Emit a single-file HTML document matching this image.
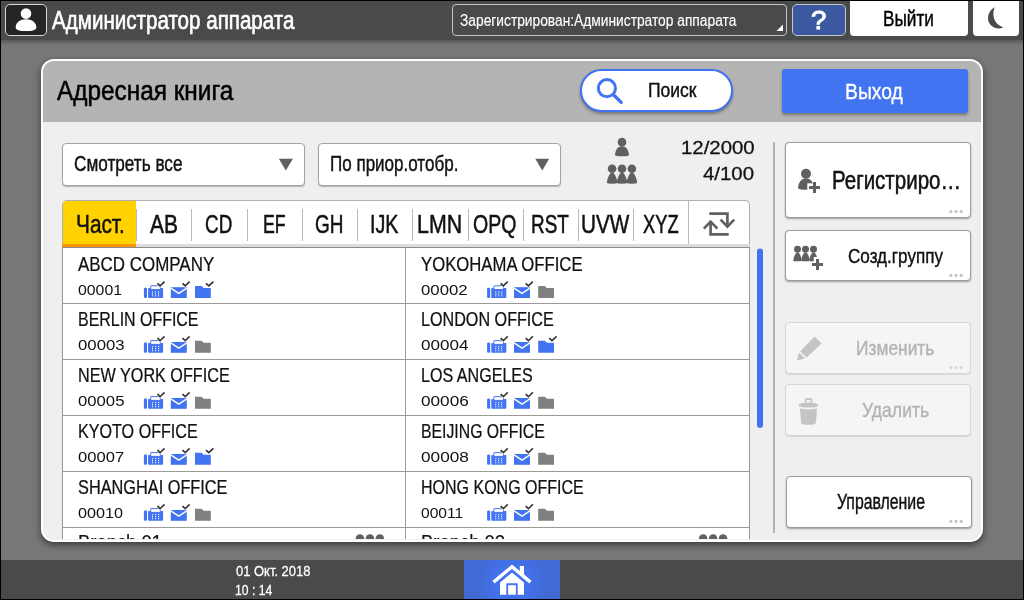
<!DOCTYPE html>
<html lang="ru"><head><meta charset="utf-8"><title>Адресная книга</title>
<style>
html,body{margin:0;padding:0;background:#000}
#root{position:relative;width:1024px;height:600px;overflow:hidden;background:#777;font-family:'Liberation Sans',sans-serif}
.t{position:absolute;white-space:pre;line-height:1;transform-origin:0 0;display:block;-webkit-text-stroke:0.028em}
.ov{position:absolute;left:0;top:0;pointer-events:none}
#top{position:absolute;left:0;top:0;width:1024px;height:40px;background:#494a4c}
#topsh{position:absolute;left:0;top:40px;width:1024px;height:5px;background:linear-gradient(#585858,#777)}
#ubox{position:absolute;left:5px;top:4px;width:40px;height:30px;border:1px solid #d8d8d8;border-radius:5px;background:#252525}
#reg{position:absolute;left:452px;top:4px;width:333px;height:30px;border:1px solid #c4c4c4;border-radius:4px;background:#494a4c}
#help{position:absolute;left:792px;top:4px;width:52px;height:30px;border:1px solid #c8c8c8;border-radius:5px;background:#3c58a0}
#logout{position:absolute;left:850px;top:1px;width:118px;height:35px;background:#fff;border-radius:0 0 4px 4px}
#moon{position:absolute;left:973px;top:1px;width:46px;height:35px;background:#fff;border-radius:0 0 4px 4px}
#dlg{position:absolute;left:41px;top:59px;width:938px;height:479px;border:2px solid #fff;border-radius:13px;background:#efefef;box-shadow:0 3px 7px 0 rgba(0,0,0,.5);overflow:hidden}
#hdr{position:absolute;left:0;top:0;width:938px;height:60.5px;background:#b4b4b4}
#search{position:absolute;left:580px;top:69px;width:149px;height:39px;border:2px solid #4273f0;border-radius:22px;background:#fff;box-shadow:0 2px 3px rgba(0,0,0,.35)}
#exit{position:absolute;left:782px;top:69px;width:186px;height:43.5px;border-radius:3px;background:#4273f0;box-shadow:0 2px 3px rgba(0,0,0,.35)}
.dd{position:absolute;top:142.5px;height:41.5px;border:1px solid #a4a4a4;border-radius:4px;background:#fff;box-shadow:0 1px 1px rgba(0,0,0,.25)}
#tabs{position:absolute;left:62px;top:200px;width:685.5px;height:43.5px;border:1px solid #b0b0b0;border-bottom:none;border-radius:5px 5px 0 0;background:#fff;overflow:hidden}
#tabs .sel{position:absolute;left:0;top:0;width:73px;height:43.5px;background:#ffd200}
#tabline{position:absolute;left:62px;top:244px;width:687.5px;height:3.3px;background:#dcdcdc}
#tabline i{position:absolute;left:0;top:0;width:74px;height:3.3px;background:#ff9600}
.sep{position:absolute;top:7.5px;width:1px;height:32.5px;background:#b8b8b8}
#list{position:absolute;left:62px;top:247px;width:685.5px;height:300px;border:1px solid #999;border-top-color:#8c8c8c;background:#fff}
.row{position:absolute;left:0;width:687px;height:55px;border-bottom:1px solid #9a9a9a}
#cdiv{position:absolute;left:342px;top:0;width:1px;height:300px;background:#9a9a9a}
#vline{position:absolute;left:773px;top:142px;width:1.5px;height:391px;background:#b4b4b4}
.btn{position:absolute;left:785px;width:184px;border:1px solid #9c9c9c;border-radius:4px;background:#fff;box-shadow:0 1px 2px rgba(0,0,0,.35)}
.btn.dis{background:#f5f5f5;border-color:#d6d6d6;box-shadow:0 1px 1px rgba(0,0,0,.1)}
#bot{position:absolute;left:0;top:560px;width:1024px;height:40px;background:#494a4c}
#frame{position:absolute;left:0;top:0;width:1022px;height:598px;border:1px solid #000;border-width:1px 1px 1px 1px}
</style></head><body>
<div id="root">
<div id="top"></div><div id="topsh"></div>
<div id="ubox"></div><div id="reg"></div><div id="help"></div><div id="logout"></div><div id="moon"></div>
<div id="dlg"><div id="hdr"></div></div>
<div id="search"></div><div id="exit"></div>
<div class="dd" style="left:62px;width:240.5px"></div><div class="dd" style="left:318px;width:240.5px"></div>
<div id="tabs"><div class="sel"></div><div class="sep" style="left:73px"></div><div class="sep" style="left:128.4px"></div><div class="sep" style="left:183.7px"></div><div class="sep" style="left:238.9px"></div><div class="sep" style="left:294.1px"></div><div class="sep" style="left:349.2px"></div><div class="sep" style="left:404.5px"></div><div class="sep" style="left:459.7px"></div><div class="sep" style="left:514.9px"></div><div class="sep" style="left:570.0px"></div><div class="sep" style="left:625.2px;top:0;height:44px"></div></div>
<div id="tabline"><i></i></div>
<div id="listclip" style="position:absolute;left:43px;top:61px;width:938px;height:478px;border-radius:11px;overflow:hidden"><div id="list" style="left:19px;top:186.4px"><div class="row" style="top:0px"></div><div class="row" style="top:56px"></div><div class="row" style="top:112px"></div><div class="row" style="top:168px"></div><div class="row" style="top:224px"></div><div class="row" style="top:280px"></div><div id="cdiv"></div></div></div>
<div id="vline"></div>
<div class="btn" style="top:142px;height:73.5px"></div>
<div class="btn" style="top:230px;height:49px"></div>
<div class="btn dis" style="top:322px;height:49.5px"></div>
<div class="btn dis" style="top:384px;height:49.5px"></div>
<div class="btn" style="top:476px;height:49.5px;left:786px;width:183.5px"></div>
<div id="bot"></div>
<svg class="ov" width="1024" height="600" viewBox="0 0 1024 600">
<defs><clipPath id="dclip"><rect x="43" y="61" width="938" height="478" rx="10"/></clipPath>
<radialGradient id="hg" gradientUnits="userSpaceOnUse" cx="512" cy="582" r="34"><stop offset="0" stop-color="#4375f3"/><stop offset="0.45" stop-color="#4272ed"/><stop offset="1" stop-color="#416ad5"/></radialGradient></defs>
<!-- user icon -->
<circle cx="26" cy="13.6" r="5.3" fill="#fff"/>
<path d="M15.7 27.4 C15.7 22.6 20 19.3 26 19.3 C32 19.3 36.3 22.6 36.3 27.4 C36.3 30.2 32 31 26 31 C20 31 15.7 30.2 15.7 27.4 Z" fill="#fff"/>
<!-- dropdown corner -->
<path d="M783 24.5 V31 H776.5 Z" fill="#fff"/>
<!-- moon -->
<path d="M994.8 7.2 C991.8 13.5 993.2 24.4 1003.6 27.2 C995.5 31.4 987 24.6 988.1 16.8 C988.7 12.2 991.6 8.8 994.8 7.2 Z" fill="#48494b"/>
<!-- search -->
<circle cx="606.9" cy="88.2" r="8.6" fill="none" stroke="#4273f0" stroke-width="3"/>
<path d="M613.4 94.8 L621.2 102.4" stroke="#4273f0" stroke-width="3.4" stroke-linecap="round"/>
<!-- triangles -->
<path d="M278.8 158.8 H292.9 L285.85 170.4 Z" fill="#606060"/>
<path d="M535.3 158.8 H549.2 L542.25 170.4 Z" fill="#606060"/>
<!-- counts icons -->
<g transform="translate(622,142.1) scale(1)" fill="#606060"><circle cx="0" cy="0" r="4.35"/><path d="M-7 12.8 C-6.6 9 -5 6 -3 5 Q0 3.4 3 5 C5 6 6.6 9 7 12.8 Q7 14.2 0 14.2 Q-7 14.2 -7 12.8 Z"/></g>
<g transform="translate(612.1,168.7) scale(1)" fill="#606060"><circle cx="0" cy="0" r="4.3"/><path d="M-5.2 13.8 C-4.8 10 -3 6 -1.6 4.6 Q0 3.4 1.6 4.6 C3 6 4.8 10 5.2 13.8 Q5.2 15 0 15 Q-5.2 15 -5.2 13.8 Z"/></g><g transform="translate(631.9,168.7) scale(1)" fill="#606060"><circle cx="0" cy="0" r="4.3"/><path d="M-5.2 13.8 C-4.8 10 -3 6 -1.6 4.6 Q0 3.4 1.6 4.6 C3 6 4.8 10 5.2 13.8 Q5.2 15 0 15 Q-5.2 15 -5.2 13.8 Z"/></g><g transform="translate(622.0,168.7) scale(1)" fill="#606060"><circle cx="0" cy="0" r="4.3"/><path d="M-5.2 13.8 C-4.8 10 -3 6 -1.6 4.6 Q0 3.4 1.6 4.6 C3 6 4.8 10 5.2 13.8 Q5.2 15 0 15 Q-5.2 15 -5.2 13.8 Z"/></g>
<!-- swap -->
<g fill="none" stroke="#606060" stroke-width="2.7">
<path d="M709.3 213.7 H727.4 V226"/><path d="M720.6 219.6 L727.4 226.6 L734.2 219.6"/>
<path d="M728.7 234.4 H710.6 V222"/><path d="M703.8 228.6 L710.6 221.6 L717.4 228.6"/>
</g>
<!-- list icons -->
<g clip-path="url(#dclip)"><g transform="translate(143.9,281.2)"><rect x="0" y="6.5" width="3.1" height="10.3" rx="1.3" fill="#4273f0"/><rect x="4.2" y="6.9" width="15" height="9.9" rx="0.8" fill="#4273f0"/><rect x="6.8" y="4.6" width="9.6" height="3.8" rx="0.4" fill="#fff" stroke="#4273f0" stroke-width="1"/><rect x="8.1" y="10.1" width="1.1" height="1.1" fill="#fff"/><rect x="8.1" y="12.1" width="1.1" height="1.1" fill="#fff"/><rect x="8.1" y="14.1" width="1.1" height="1.1" fill="#fff"/><rect x="11.1" y="10.1" width="1.1" height="1.1" fill="#fff"/><rect x="11.1" y="12.1" width="1.1" height="1.1" fill="#fff"/><rect x="11.1" y="14.1" width="1.1" height="1.1" fill="#fff"/><rect x="14.1" y="10.1" width="1.1" height="1.1" fill="#fff"/><rect x="14.1" y="12.1" width="1.1" height="1.1" fill="#fff"/><rect x="14.1" y="14.1" width="1.1" height="1.1" fill="#fff"/><path d="M13.5 2.1 L16.2 4.7 L20.6 0.4" fill="none" stroke="#fff" stroke-width="2.6"/><path d="M13.5 2.1 L16.2 4.7 L20.6 0.4" fill="none" stroke="#333" stroke-width="1.6"/></g><g transform="translate(170.8,281.2)"><rect x="0" y="6" width="16" height="10.8" fill="#4273f0"/><path d="M0 6.9 L8 12.2 L16 6.9" fill="none" stroke="#fff" stroke-width="1.4"/><path d="M11.7 2.1 L14.4 4.7 L18.8 0.4" fill="none" stroke="#fff" stroke-width="2.6"/><path d="M11.7 2.1 L14.4 4.7 L18.8 0.4" fill="none" stroke="#333" stroke-width="1.6"/></g><g transform="translate(195.0,281.2)"><path d="M0 4.8 L6.6 4.8 L8.6 6.8 L15.8 6.8 L15.8 16.8 L0 16.8 Z" fill="#4273f0"/><path d="M11 2.1 L13.8 4.7 L18.4 0.4" fill="none" stroke="#fff" stroke-width="2.6"/><path d="M11 2.1 L13.8 4.7 L18.4 0.4" fill="none" stroke="#333" stroke-width="1.6"/></g><g transform="translate(487.1,281.2)"><rect x="0" y="6.5" width="3.1" height="10.3" rx="1.3" fill="#4273f0"/><rect x="4.2" y="6.9" width="15" height="9.9" rx="0.8" fill="#4273f0"/><rect x="6.8" y="4.6" width="9.6" height="3.8" rx="0.4" fill="#fff" stroke="#4273f0" stroke-width="1"/><rect x="8.1" y="10.1" width="1.1" height="1.1" fill="#fff"/><rect x="8.1" y="12.1" width="1.1" height="1.1" fill="#fff"/><rect x="8.1" y="14.1" width="1.1" height="1.1" fill="#fff"/><rect x="11.1" y="10.1" width="1.1" height="1.1" fill="#fff"/><rect x="11.1" y="12.1" width="1.1" height="1.1" fill="#fff"/><rect x="11.1" y="14.1" width="1.1" height="1.1" fill="#fff"/><rect x="14.1" y="10.1" width="1.1" height="1.1" fill="#fff"/><rect x="14.1" y="12.1" width="1.1" height="1.1" fill="#fff"/><rect x="14.1" y="14.1" width="1.1" height="1.1" fill="#fff"/><path d="M13.5 2.1 L16.2 4.7 L20.6 0.4" fill="none" stroke="#fff" stroke-width="2.6"/><path d="M13.5 2.1 L16.2 4.7 L20.6 0.4" fill="none" stroke="#333" stroke-width="1.6"/></g><g transform="translate(514.0,281.2)"><rect x="0" y="6" width="16" height="10.8" fill="#4273f0"/><path d="M0 6.9 L8 12.2 L16 6.9" fill="none" stroke="#fff" stroke-width="1.4"/><path d="M11.7 2.1 L14.4 4.7 L18.8 0.4" fill="none" stroke="#fff" stroke-width="2.6"/><path d="M11.7 2.1 L14.4 4.7 L18.8 0.4" fill="none" stroke="#333" stroke-width="1.6"/></g><g transform="translate(538.2,281.2)"><path d="M0 4.8 L6.6 4.8 L8.6 6.8 L15.8 6.8 L15.8 16.8 L0 16.8 Z" fill="#808080"/></g><g transform="translate(143.9,336.0)"><rect x="0" y="6.5" width="3.1" height="10.3" rx="1.3" fill="#4273f0"/><rect x="4.2" y="6.9" width="15" height="9.9" rx="0.8" fill="#4273f0"/><rect x="6.8" y="4.6" width="9.6" height="3.8" rx="0.4" fill="#fff" stroke="#4273f0" stroke-width="1"/><rect x="8.1" y="10.1" width="1.1" height="1.1" fill="#fff"/><rect x="8.1" y="12.1" width="1.1" height="1.1" fill="#fff"/><rect x="8.1" y="14.1" width="1.1" height="1.1" fill="#fff"/><rect x="11.1" y="10.1" width="1.1" height="1.1" fill="#fff"/><rect x="11.1" y="12.1" width="1.1" height="1.1" fill="#fff"/><rect x="11.1" y="14.1" width="1.1" height="1.1" fill="#fff"/><rect x="14.1" y="10.1" width="1.1" height="1.1" fill="#fff"/><rect x="14.1" y="12.1" width="1.1" height="1.1" fill="#fff"/><rect x="14.1" y="14.1" width="1.1" height="1.1" fill="#fff"/><path d="M13.5 2.1 L16.2 4.7 L20.6 0.4" fill="none" stroke="#fff" stroke-width="2.6"/><path d="M13.5 2.1 L16.2 4.7 L20.6 0.4" fill="none" stroke="#333" stroke-width="1.6"/></g><g transform="translate(170.8,336.0)"><rect x="0" y="6" width="16" height="10.8" fill="#4273f0"/><path d="M0 6.9 L8 12.2 L16 6.9" fill="none" stroke="#fff" stroke-width="1.4"/><path d="M11.7 2.1 L14.4 4.7 L18.8 0.4" fill="none" stroke="#fff" stroke-width="2.6"/><path d="M11.7 2.1 L14.4 4.7 L18.8 0.4" fill="none" stroke="#333" stroke-width="1.6"/></g><g transform="translate(195.0,336.0)"><path d="M0 4.8 L6.6 4.8 L8.6 6.8 L15.8 6.8 L15.8 16.8 L0 16.8 Z" fill="#808080"/></g><g transform="translate(487.1,336.0)"><rect x="0" y="6.5" width="3.1" height="10.3" rx="1.3" fill="#4273f0"/><rect x="4.2" y="6.9" width="15" height="9.9" rx="0.8" fill="#4273f0"/><rect x="6.8" y="4.6" width="9.6" height="3.8" rx="0.4" fill="#fff" stroke="#4273f0" stroke-width="1"/><rect x="8.1" y="10.1" width="1.1" height="1.1" fill="#fff"/><rect x="8.1" y="12.1" width="1.1" height="1.1" fill="#fff"/><rect x="8.1" y="14.1" width="1.1" height="1.1" fill="#fff"/><rect x="11.1" y="10.1" width="1.1" height="1.1" fill="#fff"/><rect x="11.1" y="12.1" width="1.1" height="1.1" fill="#fff"/><rect x="11.1" y="14.1" width="1.1" height="1.1" fill="#fff"/><rect x="14.1" y="10.1" width="1.1" height="1.1" fill="#fff"/><rect x="14.1" y="12.1" width="1.1" height="1.1" fill="#fff"/><rect x="14.1" y="14.1" width="1.1" height="1.1" fill="#fff"/><path d="M13.5 2.1 L16.2 4.7 L20.6 0.4" fill="none" stroke="#fff" stroke-width="2.6"/><path d="M13.5 2.1 L16.2 4.7 L20.6 0.4" fill="none" stroke="#333" stroke-width="1.6"/></g><g transform="translate(514.0,336.0)"><rect x="0" y="6" width="16" height="10.8" fill="#4273f0"/><path d="M0 6.9 L8 12.2 L16 6.9" fill="none" stroke="#fff" stroke-width="1.4"/><path d="M11.7 2.1 L14.4 4.7 L18.8 0.4" fill="none" stroke="#fff" stroke-width="2.6"/><path d="M11.7 2.1 L14.4 4.7 L18.8 0.4" fill="none" stroke="#333" stroke-width="1.6"/></g><g transform="translate(538.2,336.0)"><path d="M0 4.8 L6.6 4.8 L8.6 6.8 L15.8 6.8 L15.8 16.8 L0 16.8 Z" fill="#4273f0"/><path d="M11 2.1 L13.8 4.7 L18.4 0.4" fill="none" stroke="#fff" stroke-width="2.6"/><path d="M11 2.1 L13.8 4.7 L18.4 0.4" fill="none" stroke="#333" stroke-width="1.6"/></g><g transform="translate(143.9,392.0)"><rect x="0" y="6.5" width="3.1" height="10.3" rx="1.3" fill="#4273f0"/><rect x="4.2" y="6.9" width="15" height="9.9" rx="0.8" fill="#4273f0"/><rect x="6.8" y="4.6" width="9.6" height="3.8" rx="0.4" fill="#fff" stroke="#4273f0" stroke-width="1"/><rect x="8.1" y="10.1" width="1.1" height="1.1" fill="#fff"/><rect x="8.1" y="12.1" width="1.1" height="1.1" fill="#fff"/><rect x="8.1" y="14.1" width="1.1" height="1.1" fill="#fff"/><rect x="11.1" y="10.1" width="1.1" height="1.1" fill="#fff"/><rect x="11.1" y="12.1" width="1.1" height="1.1" fill="#fff"/><rect x="11.1" y="14.1" width="1.1" height="1.1" fill="#fff"/><rect x="14.1" y="10.1" width="1.1" height="1.1" fill="#fff"/><rect x="14.1" y="12.1" width="1.1" height="1.1" fill="#fff"/><rect x="14.1" y="14.1" width="1.1" height="1.1" fill="#fff"/><path d="M13.5 2.1 L16.2 4.7 L20.6 0.4" fill="none" stroke="#fff" stroke-width="2.6"/><path d="M13.5 2.1 L16.2 4.7 L20.6 0.4" fill="none" stroke="#333" stroke-width="1.6"/></g><g transform="translate(170.8,392.0)"><rect x="0" y="6" width="16" height="10.8" fill="#4273f0"/><path d="M0 6.9 L8 12.2 L16 6.9" fill="none" stroke="#fff" stroke-width="1.4"/><path d="M11.7 2.1 L14.4 4.7 L18.8 0.4" fill="none" stroke="#fff" stroke-width="2.6"/><path d="M11.7 2.1 L14.4 4.7 L18.8 0.4" fill="none" stroke="#333" stroke-width="1.6"/></g><g transform="translate(195.0,392.0)"><path d="M0 4.8 L6.6 4.8 L8.6 6.8 L15.8 6.8 L15.8 16.8 L0 16.8 Z" fill="#808080"/></g><g transform="translate(487.1,392.0)"><rect x="0" y="6.5" width="3.1" height="10.3" rx="1.3" fill="#4273f0"/><rect x="4.2" y="6.9" width="15" height="9.9" rx="0.8" fill="#4273f0"/><rect x="6.8" y="4.6" width="9.6" height="3.8" rx="0.4" fill="#fff" stroke="#4273f0" stroke-width="1"/><rect x="8.1" y="10.1" width="1.1" height="1.1" fill="#fff"/><rect x="8.1" y="12.1" width="1.1" height="1.1" fill="#fff"/><rect x="8.1" y="14.1" width="1.1" height="1.1" fill="#fff"/><rect x="11.1" y="10.1" width="1.1" height="1.1" fill="#fff"/><rect x="11.1" y="12.1" width="1.1" height="1.1" fill="#fff"/><rect x="11.1" y="14.1" width="1.1" height="1.1" fill="#fff"/><rect x="14.1" y="10.1" width="1.1" height="1.1" fill="#fff"/><rect x="14.1" y="12.1" width="1.1" height="1.1" fill="#fff"/><rect x="14.1" y="14.1" width="1.1" height="1.1" fill="#fff"/><path d="M13.5 2.1 L16.2 4.7 L20.6 0.4" fill="none" stroke="#fff" stroke-width="2.6"/><path d="M13.5 2.1 L16.2 4.7 L20.6 0.4" fill="none" stroke="#333" stroke-width="1.6"/></g><g transform="translate(514.0,392.0)"><rect x="0" y="6" width="16" height="10.8" fill="#4273f0"/><path d="M0 6.9 L8 12.2 L16 6.9" fill="none" stroke="#fff" stroke-width="1.4"/><path d="M11.7 2.1 L14.4 4.7 L18.8 0.4" fill="none" stroke="#fff" stroke-width="2.6"/><path d="M11.7 2.1 L14.4 4.7 L18.8 0.4" fill="none" stroke="#333" stroke-width="1.6"/></g><g transform="translate(538.2,392.0)"><path d="M0 4.8 L6.6 4.8 L8.6 6.8 L15.8 6.8 L15.8 16.8 L0 16.8 Z" fill="#808080"/></g><g transform="translate(143.9,448.0)"><rect x="0" y="6.5" width="3.1" height="10.3" rx="1.3" fill="#4273f0"/><rect x="4.2" y="6.9" width="15" height="9.9" rx="0.8" fill="#4273f0"/><rect x="6.8" y="4.6" width="9.6" height="3.8" rx="0.4" fill="#fff" stroke="#4273f0" stroke-width="1"/><rect x="8.1" y="10.1" width="1.1" height="1.1" fill="#fff"/><rect x="8.1" y="12.1" width="1.1" height="1.1" fill="#fff"/><rect x="8.1" y="14.1" width="1.1" height="1.1" fill="#fff"/><rect x="11.1" y="10.1" width="1.1" height="1.1" fill="#fff"/><rect x="11.1" y="12.1" width="1.1" height="1.1" fill="#fff"/><rect x="11.1" y="14.1" width="1.1" height="1.1" fill="#fff"/><rect x="14.1" y="10.1" width="1.1" height="1.1" fill="#fff"/><rect x="14.1" y="12.1" width="1.1" height="1.1" fill="#fff"/><rect x="14.1" y="14.1" width="1.1" height="1.1" fill="#fff"/><path d="M13.5 2.1 L16.2 4.7 L20.6 0.4" fill="none" stroke="#fff" stroke-width="2.6"/><path d="M13.5 2.1 L16.2 4.7 L20.6 0.4" fill="none" stroke="#333" stroke-width="1.6"/></g><g transform="translate(170.8,448.0)"><rect x="0" y="6" width="16" height="10.8" fill="#4273f0"/><path d="M0 6.9 L8 12.2 L16 6.9" fill="none" stroke="#fff" stroke-width="1.4"/><path d="M11.7 2.1 L14.4 4.7 L18.8 0.4" fill="none" stroke="#fff" stroke-width="2.6"/><path d="M11.7 2.1 L14.4 4.7 L18.8 0.4" fill="none" stroke="#333" stroke-width="1.6"/></g><g transform="translate(195.0,448.0)"><path d="M0 4.8 L6.6 4.8 L8.6 6.8 L15.8 6.8 L15.8 16.8 L0 16.8 Z" fill="#4273f0"/><path d="M11 2.1 L13.8 4.7 L18.4 0.4" fill="none" stroke="#fff" stroke-width="2.6"/><path d="M11 2.1 L13.8 4.7 L18.4 0.4" fill="none" stroke="#333" stroke-width="1.6"/></g><g transform="translate(487.1,448.0)"><rect x="0" y="6.5" width="3.1" height="10.3" rx="1.3" fill="#4273f0"/><rect x="4.2" y="6.9" width="15" height="9.9" rx="0.8" fill="#4273f0"/><rect x="6.8" y="4.6" width="9.6" height="3.8" rx="0.4" fill="#fff" stroke="#4273f0" stroke-width="1"/><rect x="8.1" y="10.1" width="1.1" height="1.1" fill="#fff"/><rect x="8.1" y="12.1" width="1.1" height="1.1" fill="#fff"/><rect x="8.1" y="14.1" width="1.1" height="1.1" fill="#fff"/><rect x="11.1" y="10.1" width="1.1" height="1.1" fill="#fff"/><rect x="11.1" y="12.1" width="1.1" height="1.1" fill="#fff"/><rect x="11.1" y="14.1" width="1.1" height="1.1" fill="#fff"/><rect x="14.1" y="10.1" width="1.1" height="1.1" fill="#fff"/><rect x="14.1" y="12.1" width="1.1" height="1.1" fill="#fff"/><rect x="14.1" y="14.1" width="1.1" height="1.1" fill="#fff"/><path d="M13.5 2.1 L16.2 4.7 L20.6 0.4" fill="none" stroke="#fff" stroke-width="2.6"/><path d="M13.5 2.1 L16.2 4.7 L20.6 0.4" fill="none" stroke="#333" stroke-width="1.6"/></g><g transform="translate(514.0,448.0)"><rect x="0" y="6" width="16" height="10.8" fill="#4273f0"/><path d="M0 6.9 L8 12.2 L16 6.9" fill="none" stroke="#fff" stroke-width="1.4"/><path d="M11.7 2.1 L14.4 4.7 L18.8 0.4" fill="none" stroke="#fff" stroke-width="2.6"/><path d="M11.7 2.1 L14.4 4.7 L18.8 0.4" fill="none" stroke="#333" stroke-width="1.6"/></g><g transform="translate(538.2,448.0)"><path d="M0 4.8 L6.6 4.8 L8.6 6.8 L15.8 6.8 L15.8 16.8 L0 16.8 Z" fill="#808080"/></g><g transform="translate(143.9,504.0)"><rect x="0" y="6.5" width="3.1" height="10.3" rx="1.3" fill="#4273f0"/><rect x="4.2" y="6.9" width="15" height="9.9" rx="0.8" fill="#4273f0"/><rect x="6.8" y="4.6" width="9.6" height="3.8" rx="0.4" fill="#fff" stroke="#4273f0" stroke-width="1"/><rect x="8.1" y="10.1" width="1.1" height="1.1" fill="#fff"/><rect x="8.1" y="12.1" width="1.1" height="1.1" fill="#fff"/><rect x="8.1" y="14.1" width="1.1" height="1.1" fill="#fff"/><rect x="11.1" y="10.1" width="1.1" height="1.1" fill="#fff"/><rect x="11.1" y="12.1" width="1.1" height="1.1" fill="#fff"/><rect x="11.1" y="14.1" width="1.1" height="1.1" fill="#fff"/><rect x="14.1" y="10.1" width="1.1" height="1.1" fill="#fff"/><rect x="14.1" y="12.1" width="1.1" height="1.1" fill="#fff"/><rect x="14.1" y="14.1" width="1.1" height="1.1" fill="#fff"/><path d="M13.5 2.1 L16.2 4.7 L20.6 0.4" fill="none" stroke="#fff" stroke-width="2.6"/><path d="M13.5 2.1 L16.2 4.7 L20.6 0.4" fill="none" stroke="#333" stroke-width="1.6"/></g><g transform="translate(170.8,504.0)"><rect x="0" y="6" width="16" height="10.8" fill="#4273f0"/><path d="M0 6.9 L8 12.2 L16 6.9" fill="none" stroke="#fff" stroke-width="1.4"/><path d="M11.7 2.1 L14.4 4.7 L18.8 0.4" fill="none" stroke="#fff" stroke-width="2.6"/><path d="M11.7 2.1 L14.4 4.7 L18.8 0.4" fill="none" stroke="#333" stroke-width="1.6"/></g><g transform="translate(195.0,504.0)"><path d="M0 4.8 L6.6 4.8 L8.6 6.8 L15.8 6.8 L15.8 16.8 L0 16.8 Z" fill="#808080"/></g><g transform="translate(487.1,504.0)"><rect x="0" y="6.5" width="3.1" height="10.3" rx="1.3" fill="#4273f0"/><rect x="4.2" y="6.9" width="15" height="9.9" rx="0.8" fill="#4273f0"/><rect x="6.8" y="4.6" width="9.6" height="3.8" rx="0.4" fill="#fff" stroke="#4273f0" stroke-width="1"/><rect x="8.1" y="10.1" width="1.1" height="1.1" fill="#fff"/><rect x="8.1" y="12.1" width="1.1" height="1.1" fill="#fff"/><rect x="8.1" y="14.1" width="1.1" height="1.1" fill="#fff"/><rect x="11.1" y="10.1" width="1.1" height="1.1" fill="#fff"/><rect x="11.1" y="12.1" width="1.1" height="1.1" fill="#fff"/><rect x="11.1" y="14.1" width="1.1" height="1.1" fill="#fff"/><rect x="14.1" y="10.1" width="1.1" height="1.1" fill="#fff"/><rect x="14.1" y="12.1" width="1.1" height="1.1" fill="#fff"/><rect x="14.1" y="14.1" width="1.1" height="1.1" fill="#fff"/><path d="M13.5 2.1 L16.2 4.7 L20.6 0.4" fill="none" stroke="#fff" stroke-width="2.6"/><path d="M13.5 2.1 L16.2 4.7 L20.6 0.4" fill="none" stroke="#333" stroke-width="1.6"/></g><g transform="translate(514.0,504.0)"><rect x="0" y="6" width="16" height="10.8" fill="#4273f0"/><path d="M0 6.9 L8 12.2 L16 6.9" fill="none" stroke="#fff" stroke-width="1.4"/><path d="M11.7 2.1 L14.4 4.7 L18.8 0.4" fill="none" stroke="#fff" stroke-width="2.6"/><path d="M11.7 2.1 L14.4 4.7 L18.8 0.4" fill="none" stroke="#333" stroke-width="1.6"/></g><g transform="translate(538.2,504.0)"><path d="M0 4.8 L6.6 4.8 L8.6 6.8 L15.8 6.8 L15.8 16.8 L0 16.8 Z" fill="#808080"/></g><g transform="translate(359.95,538.65) scale(1)" fill="#606060"><circle cx="0" cy="0" r="4.3"/><path d="M-5.2 13.8 C-4.8 10 -3 6 -1.6 4.6 Q0 3.4 1.6 4.6 C3 6 4.8 10 5.2 13.8 Q5.2 15 0 15 Q-5.2 15 -5.2 13.8 Z"/></g><g transform="translate(379.84999999999997,538.65) scale(1)" fill="#606060"><circle cx="0" cy="0" r="4.3"/><path d="M-5.2 13.8 C-4.8 10 -3 6 -1.6 4.6 Q0 3.4 1.6 4.6 C3 6 4.8 10 5.2 13.8 Q5.2 15 0 15 Q-5.2 15 -5.2 13.8 Z"/></g><g transform="translate(369.9,538.65) scale(1)" fill="#606060"><circle cx="0" cy="0" r="4.3"/><path d="M-5.2 13.8 C-4.8 10 -3 6 -1.6 4.6 Q0 3.4 1.6 4.6 C3 6 4.8 10 5.2 13.8 Q5.2 15 0 15 Q-5.2 15 -5.2 13.8 Z"/></g><g transform="translate(703.15,538.65) scale(1)" fill="#606060"><circle cx="0" cy="0" r="4.3"/><path d="M-5.2 13.8 C-4.8 10 -3 6 -1.6 4.6 Q0 3.4 1.6 4.6 C3 6 4.8 10 5.2 13.8 Q5.2 15 0 15 Q-5.2 15 -5.2 13.8 Z"/></g><g transform="translate(723.0500000000001,538.65) scale(1)" fill="#606060"><circle cx="0" cy="0" r="4.3"/><path d="M-5.2 13.8 C-4.8 10 -3 6 -1.6 4.6 Q0 3.4 1.6 4.6 C3 6 4.8 10 5.2 13.8 Q5.2 15 0 15 Q-5.2 15 -5.2 13.8 Z"/></g><g transform="translate(713.1,538.65) scale(1)" fill="#606060"><circle cx="0" cy="0" r="4.3"/><path d="M-5.2 13.8 C-4.8 10 -3 6 -1.6 4.6 Q0 3.4 1.6 4.6 C3 6 4.8 10 5.2 13.8 Q5.2 15 0 15 Q-5.2 15 -5.2 13.8 Z"/></g></g>
<!-- scrollbar -->
<rect x="757" y="248.5" width="6" height="179.5" rx="3" fill="#4273f0"/>
<!-- register icon -->
<g fill="#606060"><circle cx="806" cy="173.7" r="5"/><path d="M798 188 C798.4 183.5 800.5 179.8 803.5 178.8 Q806 177.6 808.5 178.8 C811.5 179.8 813.6 183.5 814 188 Q814 189.8 806 189.8 Q798 189.8 798 188 Z"/></g>
<rect x="807.3" y="183.3" width="14" height="11" fill="#fff"/>
<path d="M809 187.5 H820 M814.5 182 V193" stroke="#606060" stroke-width="3" fill="none"/>
<g transform="translate(797.4972,249.2) scale(0.81)" fill="#606060"><circle cx="0" cy="0" r="4.3"/><path d="M-5.2 13.8 C-4.8 10 -3 6 -1.6 4.6 Q0 3.4 1.6 4.6 C3 6 4.8 10 5.2 13.8 Q5.2 15 0 15 Q-5.2 15 -5.2 13.8 Z"/></g><g transform="translate(813.5028,249.2) scale(0.81)" fill="#606060"><circle cx="0" cy="0" r="4.3"/><path d="M-5.2 13.8 C-4.8 10 -3 6 -1.6 4.6 Q0 3.4 1.6 4.6 C3 6 4.8 10 5.2 13.8 Q5.2 15 0 15 Q-5.2 15 -5.2 13.8 Z"/></g><g transform="translate(805.5,249.2) scale(0.81)" fill="#606060"><circle cx="0" cy="0" r="4.3"/><path d="M-5.2 13.8 C-4.8 10 -3 6 -1.6 4.6 Q0 3.4 1.6 4.6 C3 6 4.8 10 5.2 13.8 Q5.2 15 0 15 Q-5.2 15 -5.2 13.8 Z"/></g>
<rect x="813.7" y="257" width="11" height="14" fill="#fff"/>
<path d="M812 264.5 H823 M817.5 259.1 V269.9" stroke="#606060" stroke-width="3" fill="none"/>
<circle cx="950.9" cy="211.5" r="1.55" fill="#c2c2c2"/><circle cx="956.05" cy="211.5" r="1.55" fill="#c2c2c2"/><circle cx="961.1999999999999" cy="211.5" r="1.55" fill="#c2c2c2"/><circle cx="950.9" cy="275.4" r="1.55" fill="#c2c2c2"/><circle cx="956.05" cy="275.4" r="1.55" fill="#c2c2c2"/><circle cx="961.1999999999999" cy="275.4" r="1.55" fill="#c2c2c2"/><g opacity="0.6"><circle cx="950.9" cy="367.6" r="1.55" fill="#c2c2c2"/><circle cx="956.05" cy="367.6" r="1.55" fill="#c2c2c2"/><circle cx="961.1999999999999" cy="367.6" r="1.55" fill="#c2c2c2"/></g><circle cx="950.9" cy="521.4" r="1.55" fill="#c2c2c2"/><circle cx="956.05" cy="521.4" r="1.55" fill="#c2c2c2"/><circle cx="961.1999999999999" cy="521.4" r="1.55" fill="#c2c2c2"/>
<!-- pencil -->
<g fill="#c4c4c4"><path d="M796.8 360.6 L799 352.6 L805 358.4 Z"/><path d="M800.2 351.2 L814.6 336.6 L821.6 343.4 L806.6 357.4 Z"/></g>
<!-- trash -->
<g fill="#c4c4c4"><path d="M798.8 405.4 Q798.8 402.4 808.5 402.4 Q818.2 402.4 818.2 405.4 Q818.2 407.5 808.5 407.5 Q798.8 407.5 798.8 405.4 Z"/><path d="M804.8 402.8 V398.3 H812.2 V402.8 H810.6 V399.9 H806.4 V402.8 Z"/><path d="M800 408.6 Q808.5 410.2 817 408.6 L816 422.4 Q815.8 424.8 808.5 424.8 Q801.2 424.8 801 422.4 Z"/></g>
<!-- home -->
<rect x="464" y="560" width="96" height="39" fill="url(#hg)"/>
<g fill="#fff"><path d="M519.8 566 H524 V576.2 L519.8 572.2 Z"/>
<path d="M512 564.6 L531.6 580.8 L529.4 583.4 L512 568.9 L494.6 583.4 L492.4 580.8 Z"/>
<path d="M512 572.6 L524 582.6 V594.7 H517.7 V583.3 H506.3 V594.7 H500 V582.6 Z"/>
<rect x="508.1" y="585.2" width="7.8" height="9.5"/></g>
</svg>
<div id="txt" style="position:absolute;left:0;top:0;width:1024px;height:539px;overflow:hidden;will-change:transform">
<span class="t" style="left:52.20px;top:7.92px;font-size:25.1px;color:#fff;font-weight:400;-webkit-text-stroke:0.025em;transform:scaleX(0.8201)">Администратор аппарата</span>
<span class="t" style="left:460.10px;top:11.93px;font-size:17.3px;color:#fff;font-weight:400;-webkit-text-stroke:0.008em;transform:scaleX(0.7967)">Зарегистрирован:Администратор аппарата</span>
<span class="t" style="left:811.25px;top:7.56px;font-size:25.4px;color:#fff;font-weight:400;-webkit-text-stroke:0.035em;transform:scaleX(1.0923)">?</span>
<span class="t" style="left:883.32px;top:7.71px;font-size:21.8px;color:#000;font-weight:400;-webkit-text-stroke:0.02em;transform:scaleX(0.7887)">Выйти</span>
<span class="t" style="left:56.91px;top:76.66px;font-size:28px;color:#000;font-weight:400;-webkit-text-stroke:0.02em;transform:scaleX(0.8700)">Адресная книга</span>
<span class="t" style="left:648.06px;top:78.81px;font-size:21.1px;color:#111;font-weight:400;-webkit-text-stroke:0.02em;transform:scaleX(0.8297)">Поиск</span>
<span class="t" style="left:844.91px;top:79.75px;font-size:22.7px;color:#fff;font-weight:400;-webkit-text-stroke:0.015em;transform:scaleX(0.8530)">Выход</span>
<span class="t" style="left:74.24px;top:152.91px;font-size:21.8px;color:#111;font-weight:400;-webkit-text-stroke:0.02em;transform:scaleX(0.7882)">Смотреть все</span>
<span class="t" style="left:330.23px;top:152.91px;font-size:21.8px;color:#111;font-weight:400;-webkit-text-stroke:0.02em;transform:scaleX(0.7808)">По приор.отобр.</span>
<span class="t" style="left:680.83px;top:138.53px;font-size:18.6px;color:#111;font-weight:400;-webkit-text-stroke:0.015em;transform:scaleX(1.0958)">12/2000</span>
<span class="t" style="left:703.32px;top:164.60px;font-size:18.4px;color:#111;font-weight:400;-webkit-text-stroke:0.015em;transform:scaleX(1.1072)">4/100</span>
<span class="t" style="left:75.78px;top:211.51px;font-size:25.7px;color:#111;font-weight:400;-webkit-text-stroke:0.02em;transform:scaleX(0.8106)">Част.</span>
<span class="t" style="left:150.30px;top:211.51px;font-size:25.7px;color:#111;font-weight:400;-webkit-text-stroke:0.02em;transform:scaleX(0.8168)">AB</span>
<span class="t" style="left:205.08px;top:211.51px;font-size:25.7px;color:#111;font-weight:400;-webkit-text-stroke:0.02em;transform:scaleX(0.7348)">CD</span>
<span class="t" style="left:262.84px;top:211.51px;font-size:25.7px;color:#111;font-weight:400;-webkit-text-stroke:0.02em;transform:scaleX(0.6926)">EF</span>
<span class="t" style="left:315.06px;top:211.51px;font-size:25.7px;color:#111;font-weight:400;-webkit-text-stroke:0.02em;transform:scaleX(0.7385)">GH</span>
<span class="t" style="left:369.88px;top:211.51px;font-size:25.7px;color:#111;font-weight:400;-webkit-text-stroke:0.02em;transform:scaleX(0.7672)">IJK</span>
<span class="t" style="left:417.45px;top:211.51px;font-size:25.7px;color:#111;font-weight:400;-webkit-text-stroke:0.02em;transform:scaleX(0.8325)">LMN</span>
<span class="t" style="left:473.20px;top:211.51px;font-size:25.7px;color:#111;font-weight:400;-webkit-text-stroke:0.02em;transform:scaleX(0.7602)">OPQ</span>
<span class="t" style="left:530.91px;top:211.51px;font-size:25.7px;color:#111;font-weight:400;-webkit-text-stroke:0.02em;transform:scaleX(0.7360)">RST</span>
<span class="t" style="left:581.09px;top:211.51px;font-size:25.7px;color:#111;font-weight:400;-webkit-text-stroke:0.02em;transform:scaleX(0.8052)">UVW</span>
<span class="t" style="left:643.22px;top:211.51px;font-size:25.7px;color:#111;font-weight:400;-webkit-text-stroke:0.02em;transform:scaleX(0.7117)">XYZ</span>
<span class="t" style="left:77.80px;top:253.97px;font-size:20.2px;color:#111;font-weight:400;-webkit-text-stroke:0.012em;transform:scaleX(0.8392)">ABCD COMPANY</span>
<span class="t" style="left:420.80px;top:253.97px;font-size:20.2px;color:#111;font-weight:400;-webkit-text-stroke:0.012em;transform:scaleX(0.8278)">YOKOHAMA OFFICE</span>
<span class="t" style="left:78.19px;top:282.14px;font-size:15.4px;color:#111;font-weight:400;-webkit-text-stroke:0em;transform:scaleX(1.0289)">00001</span>
<span class="t" style="left:421.16px;top:282.14px;font-size:15.4px;color:#111;font-weight:400;-webkit-text-stroke:0em;transform:scaleX(1.0892)">00002</span>
<span class="t" style="left:77.80px;top:308.77px;font-size:20.2px;color:#111;font-weight:400;-webkit-text-stroke:0.012em;transform:scaleX(0.7896)">BERLIN OFFICE</span>
<span class="t" style="left:420.80px;top:308.77px;font-size:20.2px;color:#111;font-weight:400;-webkit-text-stroke:0.012em;transform:scaleX(0.8000)">LONDON OFFICE</span>
<span class="t" style="left:78.16px;top:336.94px;font-size:15.4px;color:#111;font-weight:400;-webkit-text-stroke:0em;transform:scaleX(1.0895)">00003</span>
<span class="t" style="left:421.15px;top:336.94px;font-size:15.4px;color:#111;font-weight:400;-webkit-text-stroke:0em;transform:scaleX(1.1090)">00004</span>
<span class="t" style="left:77.80px;top:364.77px;font-size:20.2px;color:#111;font-weight:400;-webkit-text-stroke:0.012em;transform:scaleX(0.8021)">NEW YORK OFFICE</span>
<span class="t" style="left:420.80px;top:364.77px;font-size:20.2px;color:#111;font-weight:400;-webkit-text-stroke:0.012em;transform:scaleX(0.7971)">LOS ANGELES</span>
<span class="t" style="left:78.16px;top:392.94px;font-size:15.4px;color:#111;font-weight:400;-webkit-text-stroke:0em;transform:scaleX(1.0850)">00005</span>
<span class="t" style="left:421.15px;top:392.94px;font-size:15.4px;color:#111;font-weight:400;-webkit-text-stroke:0em;transform:scaleX(1.1168)">00006</span>
<span class="t" style="left:77.80px;top:420.77px;font-size:20.2px;color:#111;font-weight:400;-webkit-text-stroke:0.012em;transform:scaleX(0.7987)">KYOTO OFFICE</span>
<span class="t" style="left:420.80px;top:420.77px;font-size:20.2px;color:#111;font-weight:400;-webkit-text-stroke:0.012em;transform:scaleX(0.7822)">BEIJING OFFICE</span>
<span class="t" style="left:78.16px;top:448.94px;font-size:15.4px;color:#111;font-weight:400;-webkit-text-stroke:0em;transform:scaleX(1.0771)">00007</span>
<span class="t" style="left:421.15px;top:448.94px;font-size:15.4px;color:#111;font-weight:400;-webkit-text-stroke:0em;transform:scaleX(1.1178)">00008</span>
<span class="t" style="left:77.80px;top:476.77px;font-size:20.2px;color:#111;font-weight:400;-webkit-text-stroke:0.012em;transform:scaleX(0.8078)">SHANGHAI OFFICE</span>
<span class="t" style="left:420.80px;top:476.77px;font-size:20.2px;color:#111;font-weight:400;-webkit-text-stroke:0.012em;transform:scaleX(0.7932)">HONG KONG OFFICE</span>
<span class="t" style="left:78.17px;top:504.94px;font-size:15.4px;color:#111;font-weight:400;-webkit-text-stroke:0em;transform:scaleX(1.0515)">00010</span>
<span class="t" style="left:421.20px;top:504.94px;font-size:15.4px;color:#111;font-weight:400;-webkit-text-stroke:0em;transform:scaleX(1.0134)">00011</span>
<span class="t" style="left:77.80px;top:532.17px;font-size:20.2px;color:#111;font-weight:400;-webkit-text-stroke:0.012em;transform:scaleX(0.9118)">Branch 01</span>
<span class="t" style="left:420.80px;top:532.17px;font-size:20.2px;color:#111;font-weight:400;-webkit-text-stroke:0.012em;transform:scaleX(0.9140)">Branch 02</span>
<span class="t" style="left:832.10px;top:167.59px;font-size:25.6px;color:#111;font-weight:400;-webkit-text-stroke:0.02em;transform:scaleX(0.8013)">Регистриро…</span>
<span class="t" style="left:847.78px;top:245.63px;font-size:20.6px;color:#111;font-weight:400;-webkit-text-stroke:0.02em;transform:scaleX(0.8299)">Созд.группу</span>
<span class="t" style="left:855.95px;top:337.88px;font-size:20.9px;color:#b4b4b4;font-weight:400;-webkit-text-stroke:0.02em;transform:scaleX(0.8315)">Изменить</span>
<span class="t" style="left:862.09px;top:399.21px;font-size:21.1px;color:#b4b4b4;font-weight:400;-webkit-text-stroke:0.02em;transform:scaleX(0.8346)">Удалить</span>
<span class="t" style="left:836.66px;top:491.87px;font-size:21.5px;color:#111;font-weight:400;-webkit-text-stroke:0.02em;transform:scaleX(0.7359)">Управление</span>
</div>
<div style="position:absolute;left:0;top:0;width:1024px;height:600px;will-change:transform"><span class="t" style="left:235.85px;top:563.77px;font-size:14.3px;color:#fff;font-weight:400;-webkit-text-stroke:0.02em;transform:scaleX(0.9058)">01 Окт. 2018</span>
<span class="t" style="left:235.09px;top:582.74px;font-size:14.1px;color:#fff;font-weight:400;-webkit-text-stroke:0.02em;transform:scaleX(0.8623)">10 : 14</span></div>
<div id="frame"></div>
</div>
</body></html>
